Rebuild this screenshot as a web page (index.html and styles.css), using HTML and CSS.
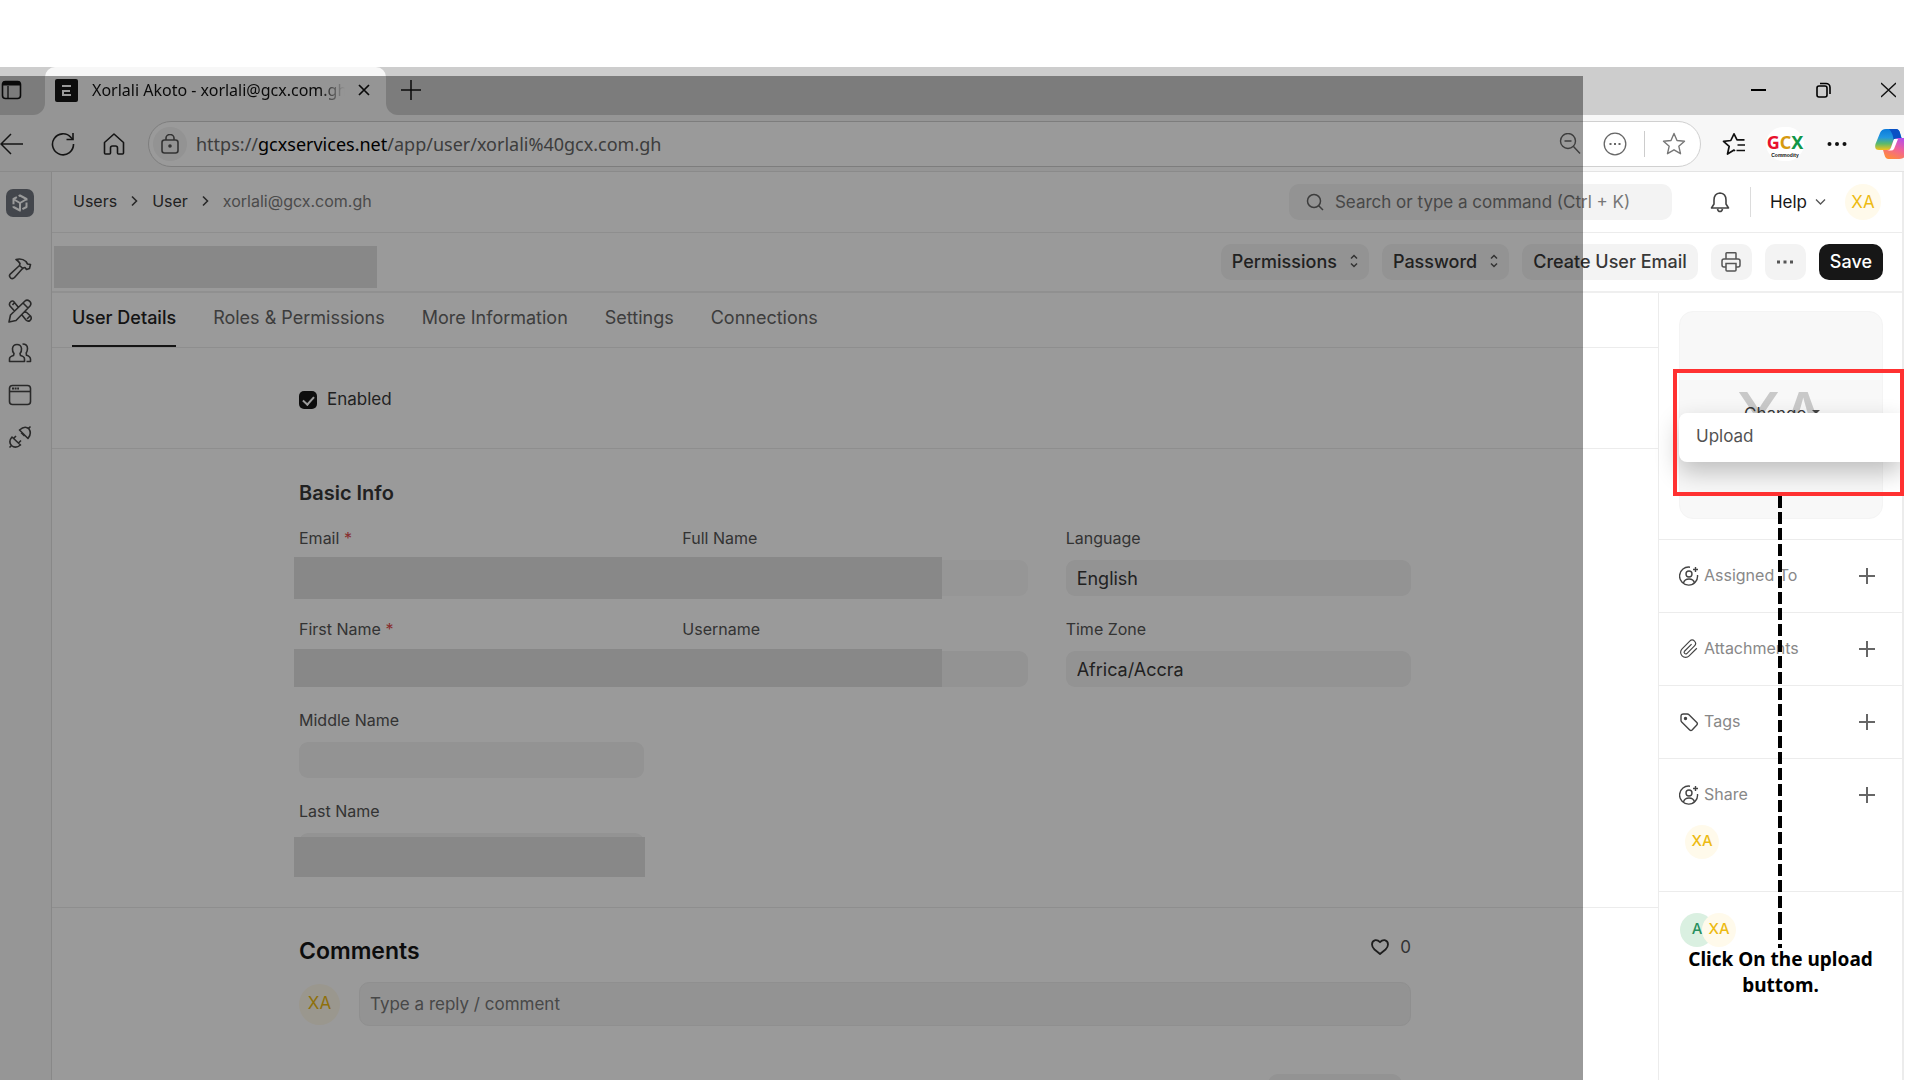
FILE: index.html
```html
<!doctype html>
<html lang="en">
<head>
	<meta charset="UTF-8" />
	<title>Xorlali Akoto - xorlali@gcx.com.gh</title>
	<link rel="stylesheet" href="styles.css">
</head>
<body>

<div class="browser">
	<!-- window tabs -->
	<div class="tab-bar">
		<div class="tab-menu">
			<svg width="21" height="21" viewBox="0 0 21 21" fill="none" stroke="#111" stroke-width="1.6"><rect x="1.5" y="1.5" width="18" height="17" rx="3"/><path d="M2 3.500h17" stroke-width="4"/><path d="M7 6v12" stroke-width="1.3"/></svg>
		</div>
		<div class="tab">
			<svg width="23" height="23" viewBox="0 0 23 23"><rect width="23" height="23" rx="2" fill="#171717"/><path d="M7 7h9M8 12h7M8 11v5h8" fill="none" stroke="#fff" stroke-width="2"/></svg>
			<span class="tab-title">Xorlali Akoto - xorlali@gcx.com.gh</span>
			<button class="plain" aria-label="Close tab"><svg width="12" height="12" viewBox="0 0 12 12" stroke="#111" stroke-width="1.7"><path d="M1 1l10 10M11 1L1 11"/></svg></button>
		</div>
		<div class="tab-rest">
			<button class="plain" aria-label="New tab"><svg width="20" height="20" viewBox="0 0 20 20" stroke="#111" stroke-width="1.5"><path d="M10 0v20M0 10h20"/></svg></button>
			<div class="window-buttons">
				<button class="plain" aria-label="Minimize"><svg width="15" height="16" viewBox="0 0 15 16" stroke="#000" stroke-width="2"><path d="M0 8h15"/></svg></button>
				<button class="plain" aria-label="Restore"><svg width="15" height="16" viewBox="0 0 15 16" fill="none" stroke="#000" stroke-width="1.6"><rect x="1" y="4" width="10" height="11" rx="2"/><path d="M4 1.5h6a4 4 0 0 1 4 4V12"/></svg></button>
				<button class="plain" aria-label="Close"><svg width="15" height="16" viewBox="0 0 15 16" stroke="#111" stroke-width="1.3"><path d="M0 1l15 14M15 1L0 15"/></svg></button>
			</div>
		</div>
	</div>

	<!-- address bar -->
	<div class="toolbar">
		<button class="plain" aria-label="Back"><svg width="23" height="22" viewBox="0 0 23 22" fill="none" stroke="#222" stroke-width="1.5"><path d="M23 11H1M11 1L1 11l10 10"/></svg></button>
		<button class="plain" aria-label="Reload"><svg width="24" height="24" viewBox="0 0 24 24" fill="none" stroke="#222" stroke-width="1.6"><path d="M22.500 12A10.500 10.500 0 1 1 20 5.500L22 7.500"/><path d="M22 1v6.500h-6.500"/></svg></button>
		<button class="plain" aria-label="Home"><svg width="22" height="24" viewBox="0 0 22 24" fill="none" stroke="#222" stroke-width="1.6" stroke-linejoin="round"><path d="M1.500 10.500L11 2l9.500 8.500V21q0 1-1 1h-4q-1 0-1-1v-5q0-2-2-2h-3q-2 0-2 2v5q0 1-1 1h-4q-1 0-1-1z"/></svg></button>
		<div class="address">
			<span class="lock"><svg width="18" height="20" viewBox="0 0 18 20" fill="none" stroke="#555" stroke-width="1.6"><rect x="1" y="6" width="16" height="13" rx="2.500"/><path d="M5 6V4a4 3.500 0 0 1 8 0v2"/><circle cx="9" cy="12" r="1" fill="#555"/></svg></span>
			<span class="url">https://<b>gcxservices.net</b>/app/user/xorlali%40gcx.com.gh</span>
			<svg width="22" height="22" viewBox="0 0 22 22" fill="none" stroke="#666" stroke-width="1.4"><circle cx="9" cy="8" r="7.500"/><path d="M5.500 8h7M14.500 13.500l6.500 7"/></svg>
			<svg width="24" height="24" viewBox="0 0 24 24" fill="none" stroke="#666" stroke-width="1.3"><circle cx="12" cy="12" r="10.800"/><path d="M6.500 12h2M11 12h2M15.500 12h2" stroke-width="2"/></svg>
			<span class="address-line"></span>
			<svg width="24" height="24" viewBox="0 0 24 24" fill="none" stroke="#777" stroke-width="1.4" stroke-linejoin="round"><path d="M12 1.500l3 7 7.500.7-5.700 5 1.700 7.500L12 17.800l-6.500 3.900 1.700-7.500-5.700-5L9 8.500z"/></svg>
		</div>
		<button class="plain" aria-label="Favorites"><svg width="24" height="24" viewBox="0 0 24 24" fill="none" stroke="#111" stroke-width="1.7" stroke-linejoin="round"><path d="M13 19l-1-1-6.500 4 1.700-7.700-5.700-5L8.800 8.500 12 1.800l3 6h7.500M15.500 13H23M14.500 18.500H23"/></svg></button>
		<span class="profile"><span class="gcx"><i>G</i><i>C</i><i>X</i></span><span class="gcx-sub">Commodity</span></span>
		<button class="plain" aria-label="Settings and more"><svg width="20" height="6" viewBox="0 0 20 6" fill="#111"><circle cx="2.500" cy="3" r="2"/><circle cx="10" cy="3" r="2"/><circle cx="17.500" cy="3" r="2"/></svg></button>
		<span class="copilot">
			<svg width="34" height="30" viewBox="0 0 34 30">
				<defs>
					<linearGradient id="cpA" x1="0" y1="0" x2="0" y2="1"><stop offset="0" stop-color="#0b7bdc"/><stop offset=".4" stop-color="#2196e0"/><stop offset=".7" stop-color="#5cba6a"/><stop offset="1" stop-color="#f5c21b"/></linearGradient>
					<linearGradient id="cpB" x1=".8" y1="0" x2=".3" y2="1"><stop offset="0" stop-color="#b04df0"/><stop offset=".5" stop-color="#f0639a"/><stop offset="1" stop-color="#ff8a3c"/></linearGradient>
				</defs>
				<path d="M25 9h4q6 0 4.500 6l-3 11q-1 4-6 4h-11q-3 0-4-4l-1.500-5h3q3 0 4-3l2.500-6q1-3 4-3z" fill="url(#cpB)"/>
				<path d="M11 0h10q3 0 4 4l1.500 5H23q-4 0-5 3.500l-2 5.500q-1 3-4 3H4q-5 0-3.500-6L5 4q1.500-4 6-4z" fill="url(#cpA)"/>
				<path d="M14 0h7q3 0 4 4l1.500 5H23q-3 0-4.500 2Q18 4 14 0z" fill="#0a50c4"/>
				<path d="M19 10h4l-4 10q-1 1.500-3 1.500h-4q3 0 4-3z" fill="#fff"/>
			</svg>
		</span>
	</div>

	<div class="app">
		<nav class="rail">
			<a class="rail-logo" href="#" aria-label="Home"><svg width="16" height="18" viewBox="0 0 16 18" fill="none" stroke="#fff" stroke-width="2" stroke-linejoin="round"><path d="M8 1.500l6.500 3.500v8L8 16.500 1.500 13V5z" stroke-dasharray="9 2"/><path d="M2 5.500L8 9l6-3.500M8 9v7"/></svg></a>
			<a href="#" aria-label="Build"><svg width="24" height="24" viewBox="0 0 24 24"><path d="M8 2.500q6-1.500 10 2l1.500 2.500 3 .5-1 4-3 1-1.500-2-2 .5-8.500 9.500q-2 2-4 .3-2-2 0-4l9-8.300.5-2q-1.500-2.500-4-4zM11.500 8.500l4 3.500"/></svg></a>
			<a href="#" aria-label="Tools"><svg width="24" height="24" viewBox="0 0 24 24"><path d="M1 23l1.500-7L17 2q2-2 4.500.2T22 7L8 21.500zM15 4l5 5M10.500 8.500l-4-5Q5 1 3 2.500q-2.500 2-1 4.500l4.500 5M6.500 3.500L4.500 6M14 16l4 5q2 2 4 .5 2.200-2 .5-4.500L17 12M22 17l-3 3"/></svg></a>
			<a href="#" aria-label="Users"><svg width="24" height="24" viewBox="0 0 24 24"><path d="M9 3.500q-4 0-4.500 4-.3 3 1.500 5l-.5 2q-4 1-4 3.500v2.500h15V18q0-2.500-4-3.500l-.5-2q1.800-2 1.500-5-.5-4-4.500-4zM14.500 3q5 0 5 4.500 0 2.500-1.300 4.500l.3 2.300q4 1.200 4 4v2.200h-4"/></svg></a>
			<a href="#" aria-label="Website"><svg width="24" height="24" viewBox="0 0 24 24"><rect x="1.500" y="2.500" width="21" height="19" rx="3"/><path d="M1.500 8.500h21"/><path d="M4 5.500h7" stroke-width="2" stroke-dasharray="2 .6"/></svg></a>
			<a href="#" aria-label="Integrations"><svg width="24" height="24" viewBox="0 0 24 24"><path d="M22.500 1.500l-2 2M11.500 5l8.500 8.500q4-5 1-9.500-4-4-9.500 1zM13 7.500l3.500 3.500M1.500 22.500l2-2M4 12l8.500 8q-5 4-9 .5-3.500-4 .5-8.500zM5.500 13.500L8 11M10.500 18l2.500-2.500"/></svg></a>
		</nav>

		<div class="page">
			<header class="navbar">
				<div class="crumbs">
					<a href="#">Users</a>
					<svg width="7" height="12" viewBox="0 0 7 12"><path d="M1 1.500L5.500 6 1 10.500"/></svg>
					<a href="#">User</a>
					<svg width="7" height="12" viewBox="0 0 7 12"><path d="M1 1.500L5.500 6 1 10.500"/></svg>
					<a class="last" href="#">xorlali@gcx.com.gh</a>
				</div>
				<div class="navbar-right">
					<label class="search">
						<svg width="18" height="18" viewBox="0 0 18 18" fill="none" stroke="#666" stroke-width="1.5"><circle cx="8" cy="8" r="6.500"/><path d="M12.500 12.500L17 17"/></svg>
						<input type="text" placeholder="Search or type a command (Ctrl + K)">
					</label>
					<button class="plain bell" aria-label="Notifications"><svg width="20" height="22" viewBox="0 0 20 22" fill="none" stroke="#444" stroke-width="1.6" stroke-linejoin="round"><path d="M10 2q-6 .5-6 7v4l-2.500 4h17L16 13V9q0-6.500-6-7zM7.500 18q.5 2.500 2.500 2.500t2.500-2.500"/></svg></button>
					<button class="plain help">Help <svg width="11" height="8" viewBox="0 0 11 8" fill="none" stroke="#555" stroke-width="1.3"><path d="M1 1.500l4.500 4.500L10 1.500"/></svg></button>
					<span class="avatar">XA</span>
				</div>
			</header>

			<div class="page-head">
				<span class="redact"></span>
				<div class="actions">
					<button class="btn">Permissions <svg width="8" height="14" viewBox="0 0 8 14"><path d="M1 4.500l3-3 3 3M1 9.500l3 3 3-3"/></svg></button>
					<button class="btn">Password <svg width="8" height="14" viewBox="0 0 8 14"><path d="M1 4.500l3-3 3 3M1 9.500l3 3 3-3"/></svg></button>
					<button class="btn">Create User Email</button>
					<button class="btn btn-icon" aria-label="Print"><svg width="20" height="20" viewBox="0 0 20 20"><path d="M5 7V1.500q0-.7.700-.7h8.600q.7 0 .7.700V7M5 15H3q-2 0-2-2V9q0-2 2-2h14q2 0 2 2v4q0 2-2 2h-2M5 11.500h10v6.500q0 1-1 1H6q-1 0-1-1z"/></svg></button>
					<button class="btn btn-icon" aria-label="Menu"><svg width="16" height="4" viewBox="0 0 16 4"><path d="M0 2h3M6.500 2h3M13 2h3" stroke-width="3"/></svg></button>
					<button class="btn btn-save">Save</button>
				</div>
			</div>

			<div class="content">
				<main class="main">
					<div class="form-tabs">
						<a class="active" href="#">User Details</a>
						<a href="#">Roles &amp; Permissions</a>
						<a href="#">More Information</a>
						<a href="#">Settings</a>
						<a href="#">Connections</a>
					</div>

					<section class="section enabled">
						<div class="inner">
							<label class="check"><input type="checkbox" checked> Enabled</label>
						</div>
					</section>

					<section class="section basic">
						<div class="inner">
							<h3>Basic Info</h3>
							<div class="columns">
								<div class="column">
									<div class="field"><label for="email">Email <em>*</em></label><input id="email" type="text"><span class="redact"></span></div>
									<div class="field"><label for="first">First Name <em>*</em></label><input id="first" type="text"><span class="redact low"></span></div>
									<div class="field"><label for="middle">Middle Name</label><input id="middle" type="text"></div>
									<div class="field"><label for="lastname">Last Name</label><input id="lastname" type="text"><span class="redact single"></span></div>
								</div>
								<div class="column">
									<div class="field"><label for="full">Full Name</label><input id="full" class="readonly" type="text" readonly></div>
									<div class="field"><label for="username">Username</label><input id="username" type="text"></div>
								</div>
								<div class="column">
									<div class="field"><label for="language">Language</label><input id="language" type="text" value="English"></div>
									<div class="field"><label for="zone">Time Zone</label><input id="zone" type="text" value="Africa/Accra"></div>
								</div>
							</div>
						</div>
					</section>

					<section class="comments">
						<div class="inner">
							<div class="comments-head">
								<h2>Comments</h2>
								<button class="plain like"><svg width="18" height="16" viewBox="0 0 18 16" fill="none" stroke="#333" stroke-width="1.8" stroke-linejoin="round"><path d="M9 3.200Q6.800.8 4.300 1.200 1 2 1 5.500 1 8 3.500 10.500L9 15l5.500-4.500Q17 8 17 5.500 17 2 13.700 1.200 11.200.8 9 3.200z"/></svg> 0</button>
							</div>
							<div class="comment-row">
								<span class="avatar big">XA</span>
								<input type="text" placeholder="Type a reply / comment" aria-label="Comment">
							</div>
							<div class="timeline"><button class="btn" aria-label="New Email"></button></div>
						</div>
					</section>
				</main>

				<aside class="side">
					<div class="side-image">
						<div class="photo">
							<span class="initials">XA</span>
							<span class="change">Change <i></i></span>
						</div>
						<a class="menu" href="#">Upload</a>
					</div>
					<div class="side-item">
						<div class="side-row">
							<svg width="20" height="20" viewBox="0 0 20 20"><path d="M11 1.200A9 9 0 1 0 18.500 9M16.500 1v5M14 3.500h5M4.500 17q1-4 5.500-4t5.500 4"/><circle cx="10" cy="8" r="3"/></svg>
							<span>Assigned To</span><button class="plain plus" aria-label="Assign"></button>
						</div>
					</div>
					<div class="side-item">
						<div class="side-row">
							<svg width="20" height="20" viewBox="0 0 24 24"><path d="M21.400 11.100l-9.200 9.200a6 6 0 0 1-8.500-8.500l9.200-9.200a4 4 0 0 1 5.700 5.700l-9.200 9.200a2 2 0 0 1-2.800-2.800l8.500-8.500"/></svg>
							<span>Attachments</span><button class="plain plus" aria-label="Attach"></button>
						</div>
					</div>
					<div class="side-item">
						<div class="side-row">
							<svg width="20" height="20" viewBox="0 0 20 20"><path d="M2 4.500Q2 2 4.500 2h3.800q1 0 1.700.7l7.800 7.800q1.200 1.200 0 2.400l-4.700 5q-1.200 1.200-2.400 0L2.700 10Q2 9.300 2 8.300z"/><circle cx="6.500" cy="6.500" r="1" fill="#333"/></svg>
							<span>Tags</span><button class="plain plus" aria-label="Add tag"></button>
						</div>
					</div>
					<div class="side-item share">
						<div class="side-row">
							<svg width="20" height="20" viewBox="0 0 20 20"><path d="M11 1.200A9 9 0 1 0 18.500 9M16.500 1v5M14 3.500h5M4.500 17q1-4 5.500-4t5.500 4"/><circle cx="10" cy="8" r="3"/></svg>
							<span>Share</span><button class="plain plus" aria-label="Share"></button>
						</div>
						<span class="avatar small">XA</span>
					</div>
					<div class="viewers"><span class="avatar small green">A</span><span class="avatar small">XA</span></div>

					<!-- walkthrough callout -->
					<div class="callout-box"></div>
					<div class="callout-line"></div>
					<p class="callout-text">Click On the upload buttom.</p>
				</aside>
			</div>
		</div>
	</div>
</div>

<div class="shade"></div>

</body>
</html>
```
FILE: styles.css
```css
* {
	box-sizing: border-box;
}
body {
	margin: 0;
	padding: 67px 16px 0 0;
	height: 100vh;
	overflow: hidden;
	position: relative;
	background: #fff;
	font-family: Inter, "Liberation Sans", sans-serif;
	font-size: 17px;
	color: #383838;
}
a {
	color: inherit;
	text-decoration: none;
}
button, input {
	font: inherit;
	color: inherit;
	border: none;
}
svg {
	display: block;
	flex: none;
}
.plain {
	background: none;
	padding: 0;
	display: flex;
	align-items: center;
}
.browser {
	height: 100%;
	display: flex;
	flex-direction: column;
	overflow: hidden;
}

/* tabs */
.tab-bar {
	flex: none;
	height: 48px;
	display: flex;
	background: linear-gradient(#cdcdcd 50%, #f7f7f7 50%);
}
.tab-menu {
	width: 45px;
	padding: 13px 0 0 1px;
	background: #cdcdcd;
	border-bottom-right-radius: 12px;
}
.tab {
	width: 341px;
	display: flex;
	align-items: center;
	padding: 0 16px 2px 10px;
	background: #f7f7f7;
	border-radius: 10px 10px 0 0;
	font-family: "Noto Sans", sans-serif;
	font-size: 16px;
	color: #111;
}
.tab-title {
	flex: 1;
	margin: 0 13px 0 14px;
	overflow: hidden;
	white-space: nowrap;
	-webkit-mask-image: linear-gradient(90deg, #000 90%, transparent);
	mask-image: linear-gradient(90deg, #000 90%, transparent);
}
.tab-rest {
	flex: 1;
	display: flex;
	justify-content: space-between;
	padding: 0 8px 2px 15px;
	background: #cdcdcd;
	border-bottom-left-radius: 12px;
}
.window-buttons {
	display: flex;
	gap: 50px;
}

/* address bar */
.toolbar {
	flex: none;
	height: 57px;
	display: flex;
	align-items: center;
	padding-top: 1px;
	background: #f7f7f7;
	border-bottom: 1px solid #e4e4e4;
}
.toolbar > .plain {
	margin-right: 28px;
}
.address {
	flex: 1;
	height: 46px;
	display: flex;
	align-items: center;
	gap: 17px;
	margin: 0 21px 0 -5px;
	padding: 0 14px 0 4px;
	background: #fff;
	border: 1px solid #d0d0d0;
	border-radius: 23px;
	font-family: "Noto Sans", sans-serif;
	font-size: 18px;
}
.lock {
	width: 34px;
	height: 34px;
	display: flex;
	align-items: center;
	justify-content: center;
	margin-right: -8px;
	border-radius: 50%;
	background: #f3f3f3;
}
.url {
	flex: 1;
	color: #666;
	white-space: nowrap;
}
.url b {
	font-weight: 400;
	color: #000;
}
.address svg + svg {
	margin-left: 5px;
}
.address-line {
	width: 1px;
	height: 26px;
	background: #ccc;
}
.toolbar > .address + .plain {
	margin-right: 20px;
}
.profile {
	width: 38px;
	height: 34px;
	margin-right: 23px;
	border-radius: 17px;
	background: #fff;
	display: flex;
	flex-direction: column;
	align-items: center;
	padding-top: 5px;
}
.gcx {
	font: bold 18px/20px "Noto Sans", sans-serif;
}
.gcx i {
	font-style: normal;
	color: #e8112d;
}
.gcx i:nth-child(2) {
	color: #d69a10;
}
.gcx i:nth-child(3) {
	color: #109648;
}
.gcx-sub {
	font: bold 5px/6px "Liberation Sans", sans-serif;
	color: #111;
}
.copilot {
	width: 29px;
	overflow: hidden;
}

/* app shell */
.app {
	flex: 1;
	display: flex;
	min-height: 0;
	border-right: 2px solid #ececec;
}
.rail {
	flex: none;
	width: 52px;
	padding: 17px 0 0 8px;
	display: flex;
	flex-direction: column;
	gap: 18px;
	background: #f9f9f9;
	border-right: 1px solid #e2e2e2;
}
.rail a svg {
	fill: none;
	stroke: #444;
	stroke-width: 1.6;
	stroke-linejoin: round;
}
.rail a.rail-logo {
	width: 28px;
	height: 28px;
	margin: 0 0 22px -2px;
	display: flex;
	align-items: center;
	justify-content: center;
	border-radius: 7px;
	background: #70757f;
}
.rail .rail-logo svg {
	stroke: #fff;
	stroke-width: 2;
}
.page {
	flex: 1;
	min-width: 0;
	display: flex;
	flex-direction: column;
}
.navbar {
	flex: none;
	height: 61px;
	display: flex;
	align-items: center;
	justify-content: space-between;
	padding: 0 21px;
	border-bottom: 1px solid #ececec;
}
.crumbs {
	display: flex;
	align-items: center;
	gap: 14px;
	padding-bottom: 2px;
	font-size: 16px;
}
.crumbs svg {
	fill: none;
	stroke: #444;
	stroke-width: 1.6;
}
.crumbs .last {
	color: #7c7c7c;
}
.navbar-right {
	display: flex;
	align-items: center;
}
.search {
	width: 383px;
	height: 36px;
	display: flex;
	align-items: center;
	gap: 11px;
	padding-left: 17px;
	border-radius: 10px;
	background: #f3f3f3;
}
.search input {
	flex: 1;
	min-width: 0;
	padding: 0;
	background: none;
}
::placeholder {
	color: #777;
	opacity: 1;
}
.bell {
	margin: 0 20px 0 38px;
}
.help {
	height: 30px;
	gap: 8px;
	margin-right: 19px;
	padding-left: 19px;
	border-left: 1px solid #dcdcdc;
	color: #171717;
}
.avatar {
	width: 36px;
	height: 36px;
	flex: none;
	display: flex;
	align-items: center;
	justify-content: center;
	border-radius: 50%;
	background: #fffaeb;
	color: #edba13;
}
.page-head {
	flex: none;
	height: 60px;
	display: flex;
	align-items: center;
	justify-content: space-between;
	padding: 0 19px 0 2px;
	border-bottom: 2px solid #efefef;
}
.redact {
	background: #e1e1e1;
}
.page-head .redact {
	align-self: flex-end;
	width: 323px;
	height: 42px;
	margin-bottom: 3px;
}
.actions {
	display: flex;
	gap: 13px;
}
.btn {
	height: 36px;
	display: flex;
	align-items: center;
	justify-content: center;
	gap: 13px;
	padding: 0 11px 2px;
	border-radius: 10px;
	background: #f3f3f3;
	font-size: 18px;
	font-weight: 500;
}
.btn svg {
	fill: none;
	stroke: #555;
	stroke-width: 1.5;
}
.btn-icon {
	width: 41px;
	padding: 0;
}
.btn-save {
	background: #171717;
	color: #fff;
}

/* form */
.content {
	flex: 1;
	display: flex;
	min-height: 0;
}
.main {
	flex: 1;
	min-width: 0;
}
.form-tabs {
	height: 55px;
	display: flex;
	gap: 37px;
	padding-left: 20px;
	border-bottom: 1px solid #ececec;
	font-size: 18px;
	color: #666;
}
.form-tabs a {
	height: 54px;
	line-height: 50px;
}
.form-tabs .active {
	font-weight: 500;
	color: #222;
	border-bottom: 2px solid #222;
}
.section {
	border-bottom: 1px solid #ececec;
}
.inner {
	max-width: 1112px;
	margin: 0 auto;
}
.enabled {
	padding: 41px 0 39px;
}
.check {
	display: flex;
	align-items: center;
	gap: 10px;
	line-height: 20px;
}
.check input {
	appearance: none;
	width: 18px;
	height: 18px;
	margin: 2px 0 0;
	border-radius: 5px;
	background: #171717;
	display: flex;
	justify-content: center;
}
.check input::after {
	content: "";
	width: 5px;
	height: 9px;
	margin-top: 3px;
	border: solid #fff;
	border-width: 0 2px 2px 0;
	transform: rotate(42deg);
}
.basic {
	padding: 32px 0 38px;
}
h3 {
	margin: 0 0 23px;
	font-size: 20px;
	line-height: 24px;
	font-weight: 600;
}
.columns {
	display: grid;
	grid-template-columns: repeat(3, 1fr);
	column-gap: 38px;
}
.column {
	display: flex;
	flex-direction: column;
	gap: 23px;
}
.field {
	position: relative;
	display: flex;
	flex-direction: column;
	gap: 12px;
}
.field label {
	font-size: 16px;
	line-height: 20px;
	color: #555;
}
.field em {
	font-style: normal;
	color: #e24c4c;
}
.field input {
	height: 36px;
	padding: 0 11px;
	border-radius: 9px;
	background: #f3f3f3;
	font-size: 18px;
}
.field .readonly {
	background: #f8f8f8;
}
/* blocks that hide personal data */
.field .redact {
	position: absolute;
	z-index: 1;
	top: 29px;
	left: -5px;
	width: 648px;
	height: 42px;
}
.field .redact.low {
	top: 30px;
	height: 38px;
}
.field .redact.single {
	top: 36px;
	width: 351px;
	height: 40px;
}
.comments {
	padding-top: 29px;
}
.comments-head {
	display: flex;
	justify-content: space-between;
	align-items: center;
	margin-bottom: 17px;
}
h2 {
	margin: 0;
	font-size: 23px;
	line-height: 28px;
	font-weight: 600;
	color: #171717;
}
.like {
	gap: 11px;
	padding-bottom: 8px;
	color: #555;
}
.comment-row {
	display: flex;
	align-items: center;
	gap: 19px;
}
.comment-row input {
	flex: 1;
	height: 44px;
	padding: 0 10px;
	border: 1px solid #ededed;
	border-radius: 10px;
	background: #f3f3f3;
}
.avatar.big {
	width: 41px;
	height: 41px;
	padding-bottom: 3px;
}
.timeline {
	display: flex;
	justify-content: flex-end;
	padding: 48px 9px 0;
}
.timeline .btn {
	width: 134px;
}

/* right sidebar */
.side {
	flex: none;
	width: 244px;
	position: relative;
	border-left: 1px solid #ececec;
}
.side-image {
	position: relative;
	padding: 18px 19px 20px 20px;
	border-bottom: 1px solid #ececec;
}
.photo {
	height: 208px;
	display: flex;
	align-items: center;
	justify-content: center;
	border: 1px solid #f4f4f4;
	border-radius: 14px;
	background: #f8f8f8;
	position: relative;
}
.initials {
	font-size: 64px;
	font-weight: 500;
	color: #c9c9c9;
}
.change {
	position: absolute;
	top: 92px;
	left: 64px;
	display: flex;
	align-items: center;
	gap: 6px;
	font-size: 17px;
}
.change i {
	border: 4px solid transparent;
	border-top-color: #444;
}
.menu {
	position: absolute;
	top: 120px;
	left: 20px;
	right: 0;
	height: 49px;
	padding-left: 17px;
	line-height: 46px;
	border-radius: 8px 0 0 8px;
	background: #fff;
	box-shadow: 0 10px 24px rgba(0, 0, 0, .24);
	color: #525252;
}
.side-item {
	height: 73px;
	padding-top: 25px;
	border-bottom: 1px solid #ececec;
}
.side-item.share {
	height: 133px;
}
.side-row {
	display: flex;
	align-items: center;
	gap: 5px;
	padding: 0 27px 0 20px;
	font-size: 16px;
	line-height: 20px;
	color: #888;
}
.side-row span {
	padding-bottom: 2px;
}
.side-row svg {
	fill: none;
	stroke: #444;
	stroke-width: 1.4;
}
.plus {
	width: 16px;
	height: 16px;
	margin-left: auto;
	background: linear-gradient(#666, #666) 50% / 16px 2px no-repeat, linear-gradient(#666, #666) 50% / 2px 16px no-repeat;
}
.avatar.small {
	width: 34px;
	height: 34px;
	padding-bottom: 3px;
	font-size: 15px;
	font-weight: 500;
}
.share .avatar {
	margin: 19px 0 0 26px;
}
.viewers {
	display: flex;
	padding: 21px 0 0 21px;
}
.viewers .avatar + .avatar {
	margin-left: -12px;
}
.avatar.green {
	background: #daf0e1;
	color: #278f5e;
}

/* callout */
.callout-box {
	position: absolute;
	top: 76px;
	left: 14px;
	right: -2px;
	height: 127px;
	border: 4px solid #ff3131;
}
.callout-line {
	position: absolute;
	top: 203px;
	left: 119px;
	width: 4px;
	height: 452px;
	background: repeating-linear-gradient(#000 0 12px, transparent 12px 16px);
}
.callout-text {
	position: absolute;
	top: 653px;
	left: 20px;
	right: 20px;
	margin: 0;
	font: bold 19px/26px "Noto Sans", sans-serif;
	color: #000;
	text-align: center;
}

/* dims everything but the right part */
.shade {
	position: absolute;
	top: 76px;
	left: 0;
	right: 337px;
	bottom: 0;
	z-index: 5;
	background: rgba(0, 0, 0, .395);
	pointer-events: none;
}
```
